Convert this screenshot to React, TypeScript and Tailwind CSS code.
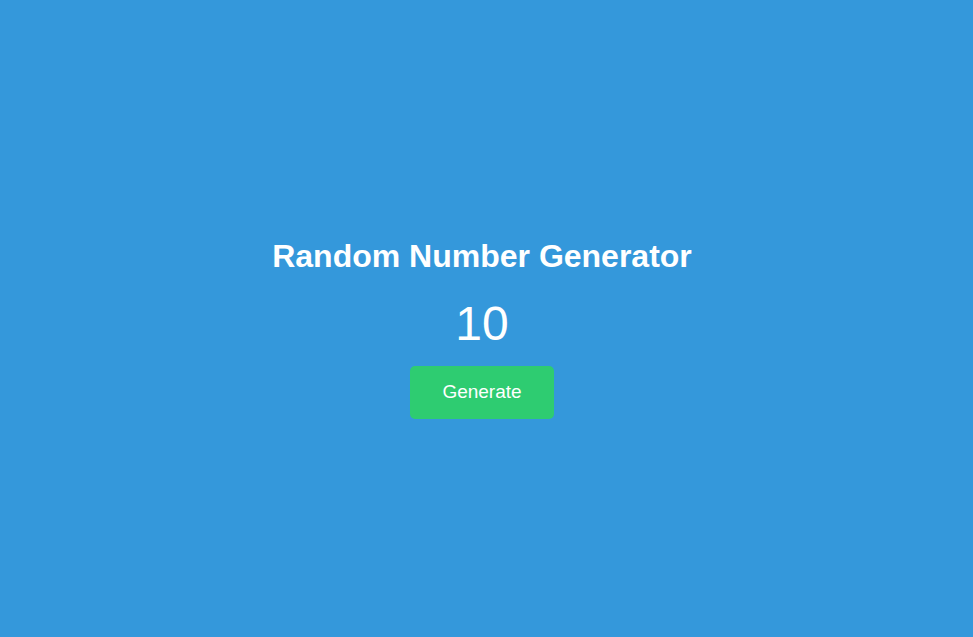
export default function App() {
  return (
    <div
      className="min-h-screen w-full bg-[#3498db] flex flex-col items-center justify-center text-white pr-[9px]"
      style={{ fontFamily: '"Liberation Sans", Arial, Helvetica, sans-serif' }}
    >
      <h1 className="mt-[19px] mb-[21px] text-[32px] leading-[37px] font-bold">Random Number Generator</h1>
      <div className="text-[48px] leading-[55px] mb-[15px]">10</div>
      <button className="w-[144px] h-[53px] rounded-[5px] bg-[#2ecc71] text-white text-[19px] flex items-center justify-center">
        Generate
      </button>
    </div>
  );
}
